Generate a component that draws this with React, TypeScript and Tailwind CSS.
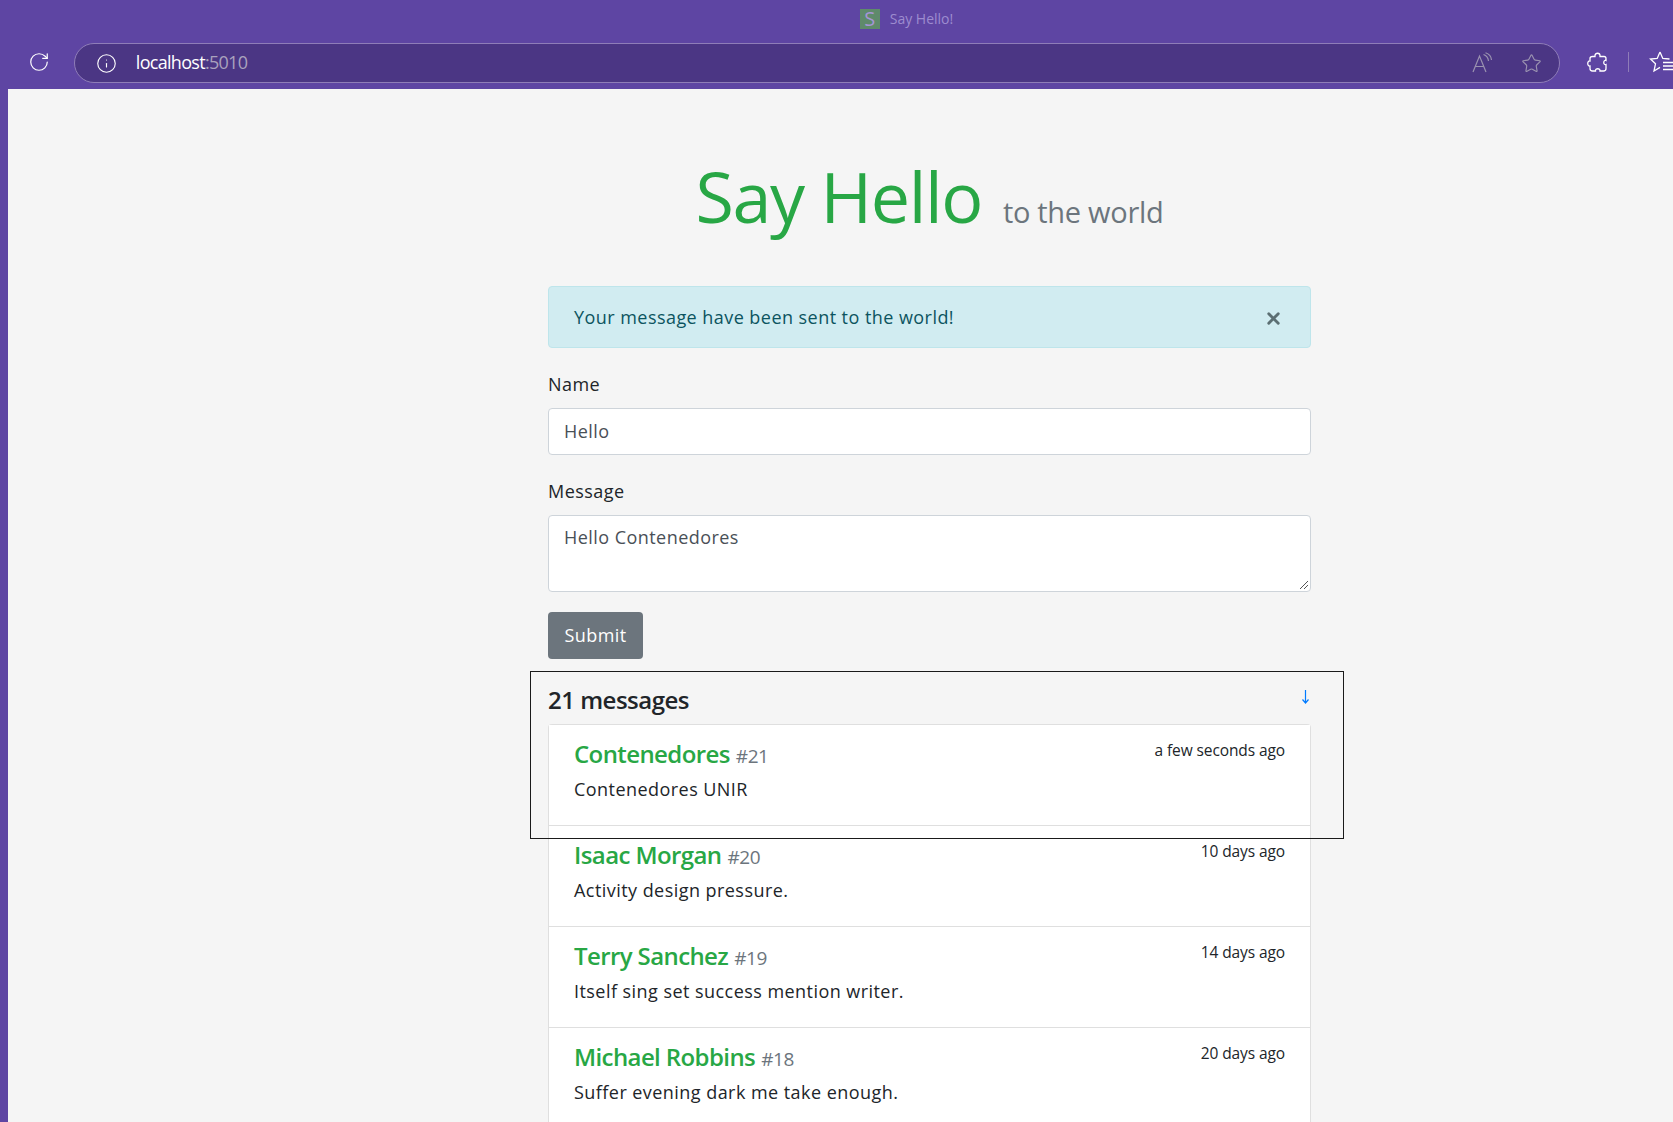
import { Info, RotateCw, Star, X } from "lucide-react";

const font = { fontFamily: '"Open Sans", "Noto Sans", sans-serif' };

const messages = [
  { name: "Contenedores", id: "#21", when: "a few seconds ago", text: "Contenedores UNIR" },
  { name: "Isaac Morgan", id: "#20", when: "10 days ago", text: "Activity design pressure." },
  { name: "Terry Sanchez", id: "#19", when: "14 days ago", text: "Itself sing set success mention writer." },
  { name: "Michael Robbins", id: "#18", when: "20 days ago", text: "Suffer evening dark me take enough." },
];

function Row({ m }: { m: (typeof messages)[number] }) {
  return (
    <div className="h-[101px] shrink-0 border-b border-[#dfdfdf] bg-white px-[25px] pt-[13px]">
      <div className="flex items-start justify-between">
        <div className="flex items-baseline gap-[6px]">
          <span className="text-[24px] leading-[32px] font-semibold tracking-[-0.6px] text-[#28a745]">{m.name}</span>
          <span className="text-[19px] leading-[32px] tracking-[-0.4px] text-[#6c757d]">{m.id}</span>
        </div>
        <span className="text-[15.5px] leading-[24px] tracking-[-0.1px] text-[#212529]">{m.when}</span>
      </div>
      <div className="mt-[4px] text-[18px] leading-[27px] tracking-[0.45px] text-[#212529]">{m.text}</div>
    </div>
  );
}

export default function App() {
  return (
    <div style={font} className="relative flex h-[1122px] w-[1673px] flex-col overflow-hidden bg-[#5e45a3]">
      <header className="h-[89px] shrink-0">
        <div className="flex h-[36px] items-center justify-center pt-[1px] pl-[140px]">
          <span className="flex h-[20px] w-[20px] items-center justify-center bg-[#5f8a6b] text-[20px] leading-[20px] text-[#a595d6]">S</span>
          <span className="ml-[10px] text-[14px] tracking-[0px] text-[#9d8ccf]">Say Hello!</span>
        </div>
        <div className="flex h-[53px] items-start">
          <div className="flex w-[74px] justify-center pt-[15px] pl-[4px]">
            <RotateCw className="h-[22px] w-[22px] text-white" strokeWidth={1.3} />
          </div>
          <div className="mt-[7px] flex h-[40px] w-[1491px] items-center rounded-full border border-[#8f7db8] bg-[#4b3684]">
            <Info className="ml-[21px] h-[21px] w-[21px] text-white" strokeWidth={1.3} />
            <span className="ml-[19px] -translate-y-[1px] text-[18px] tracking-[-0.7px] text-white">
              localhost<span className="text-[#a9a2bd]">:5010</span>
            </span>
            <div className="ml-auto flex items-center gap-[27px] pr-[17px]">
              <svg width="22" height="22" viewBox="0 0 22 22" fill="none" stroke="#9a92b0" strokeWidth="1.2">
                <path d="M1 20 L7.5 4 L14 20 M3.5 14.5 H11.5" />
                <path d="M11.5 2.5 Q16 4 16.5 9 M13.5 0.8 Q19 2.5 19.5 8" />
              </svg>
              <Star className="h-[21px] w-[21px] text-[#9a92b0]" strokeWidth={1.3} />
            </div>
          </div>
          <div className="flex items-center pt-[15px]">
            <svg className="ml-[27px]" width="21" height="21" viewBox="0 0 21 21" fill="none" stroke="white" strokeWidth="1.3">
              <path d="M8 3.5 C8 0.5 13 0.5 13 3.5 V4.5 H17 C18.5 4.5 19 5.5 19 6.5 V8.5 C16 7.5 16 13.5 19 12.5 V16.5 C19 18 18 19 16.5 19 H13 C13.5 16 8 16 8.5 19 H5.5 C4 19 3 18 3 16.5 V14 C0 14.5 0 8.5 3 9 V6.5 C3 5 4 4.5 5.5 4.5 H8 Z" />
            </svg>
            <div className="ml-[20px] h-[20px] w-[1px] bg-[#8f7db8]" />
            <svg className="ml-[20px]" width="24" height="22" viewBox="0 0 24 22" fill="none" stroke="white" strokeWidth="1.3">
              <path d="M11 1 L13.8 7.5 L20.5 8 M11 1 L8.2 7.5 L1.5 8 L6.5 12.8 L5 20 L11 16.4" />
              <path d="M14 11.5 H24 M14 15 H24 M14 18.5 H24" />
            </svg>
          </div>
        </div>
      </header>
      <main className="ml-[8px] min-h-0 flex-1 overflow-hidden bg-[#f5f5f5]">
        <div className="ml-[540px] w-[763px]">
          <div className="flex h-[197px] items-baseline justify-center pt-[63px]">
            <span className="text-[70px] leading-[88px] tracking-[-1.4px] text-[#28a745]">Say Hello</span>
            <span className="ml-[21px] text-[29px] tracking-[-0.3px] text-[#6c757d]">to the world</span>
          </div>
          <div className="flex h-[62px] items-center justify-between rounded-[4px] border border-[#bee5eb] bg-[#d1ecf1] pr-[27px] pl-[25px] text-[18px] tracking-[0.45px] text-[#0c5460]">
            <span>Your message have been sent to the world!</span>
            <X className="mt-[3px] h-[19px] w-[19px] text-[#5c6f73]" strokeWidth={3.6} />
          </div>
          <div className="mt-[22px] text-[18px] leading-[28px] tracking-[0.45px] text-[#212529]">Name</div>
          <div className="mt-[10px] flex h-[47px] items-center rounded-[4px] border border-[#ced4da] bg-white pl-[15px] text-[18px] tracking-[0.45px] text-[#495057]">Hello</div>
          <div className="mt-[22px] text-[18px] leading-[28px] tracking-[0.45px] text-[#212529]">Message</div>
          <div className="relative mt-[10px] h-[77px] rounded-[4px] border border-[#ced4da] bg-white pt-[8px] pl-[15px] text-[18px] tracking-[0.45px] text-[#495057]">
            Hello Contenedores
            <svg className="absolute right-[1px] bottom-[1px]" width="10" height="10" viewBox="0 0 10 10" stroke="#555" strokeWidth="1">
              <path d="M1 9 L9 1 M5 9 L9 5" />
            </svg>
          </div>
          <button className="mt-[20px] flex h-[47px] w-[95px] items-center justify-center rounded-[4px] bg-[#6c757d] text-[18px] tracking-[0.45px] text-white">Submit</button>
          <div className="mt-[25px] flex h-[40px] items-start justify-between">
            <span className="text-[24px] leading-[32px] font-semibold tracking-[-0.5px] text-[#212529]">21 messages</span>
            <svg className="mt-[5px] mr-[1px]" width="9" height="15" viewBox="0 0 9 15" fill="none" stroke="#007bff" strokeWidth="1.2">
              <path d="M4.5 1 V14 M1.5 10.5 L4.5 14 L7.5 10.5" />
            </svg>
          </div>
          <div className="flex flex-col rounded-t-[4px] border-x border-t border-[#dfdfdf]">
            {messages.map((m) => (
              <Row key={m.id} m={m} />
            ))}
          </div>
        </div>
      </main>
      <div className="absolute top-[671px] left-[530px] h-[168px] w-[814px] border-[1.5px] border-[#1a1a1a]" />
    </div>
  );
}
